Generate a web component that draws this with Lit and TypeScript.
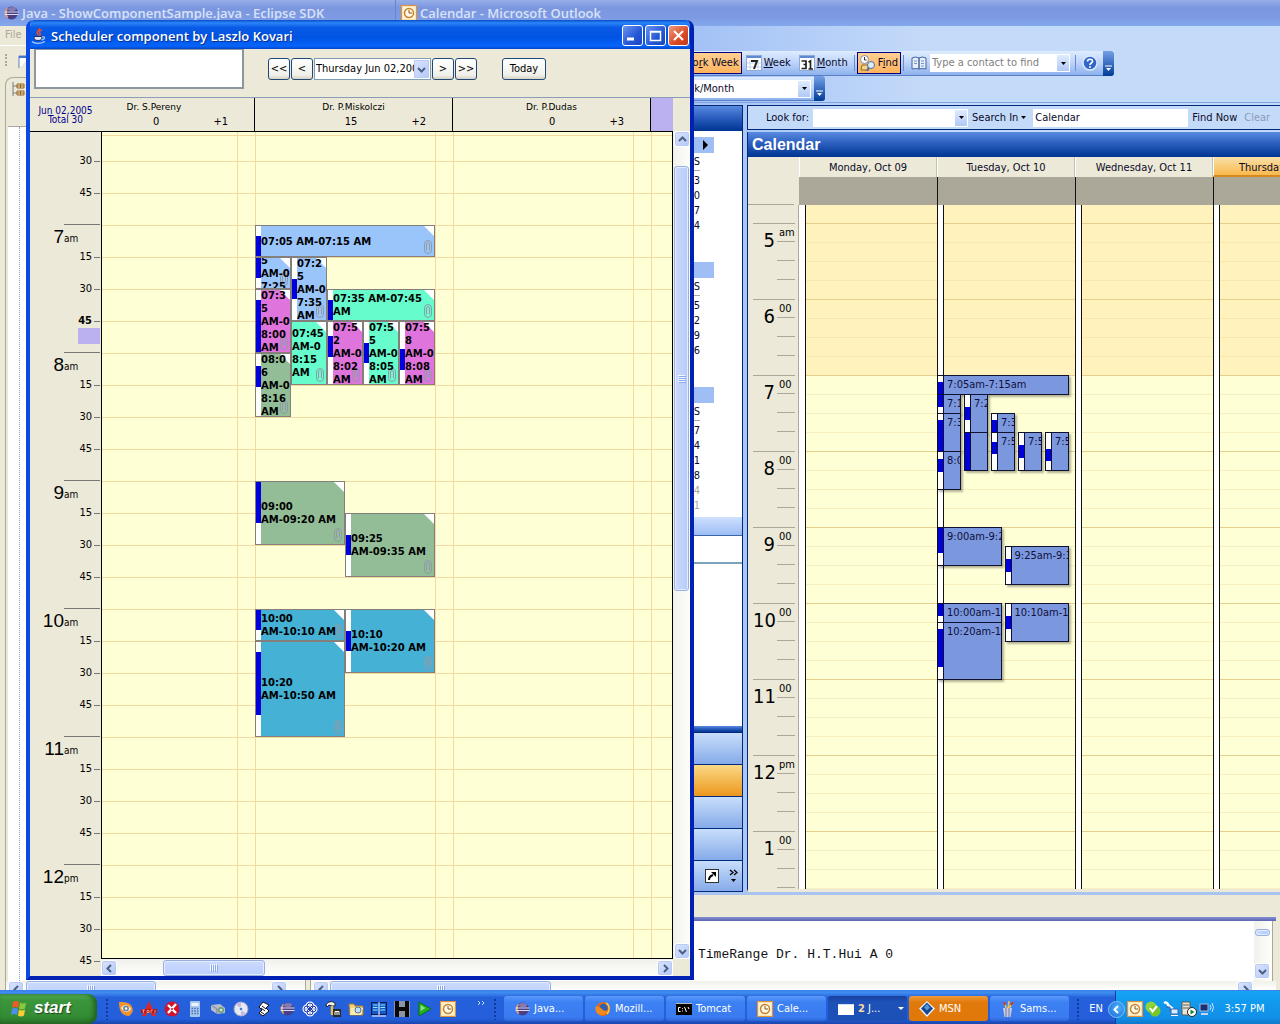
import { LitElement, html, css, svg, nothing } from "lit";
import { customElement } from "lit/decorators.js";
import { classMap } from "lit/directives/class-map.js";
import { styleMap } from "lit/directives/style-map.js";

interface Visit {
  start: number;
  end: number;
  /** Slot range in minutes since midnight, always on quarter hours. */
  from: number;
  to: number;
  tone: string;
  lines: string;
  label: string;
  /** First column and span in the ten-column scheduler grid. */
  col: number;
  span: number;
  /** First lane and span in the calendar grid. */
  lane: number;
  lanes: number;
  bare?: boolean;
}

const MORNING: Visit[] = [
  { start: 425, end: 435, from: 420, to: 435, tone: "sky", lines: "07:05 AM-07:15 AM", label: "7:05am-7:15am", col: 1, span: 10, lane: 1, lanes: 5 },
  { start: 435, end: 445, from: 435, to: 450, tone: "sky", lines: "07:1\n5\nAM-0\n7:25\nAM", label: "7:15am-7:25am", col: 1, span: 2, lane: 1, lanes: 1 },
  { start: 445, end: 455, from: 435, to: 465, tone: "sky", lines: "07:2\n5\nAM-0\n7:35\nAM", label: "7:25am-7:35am", col: 3, span: 2, lane: 2, lanes: 1 },
  { start: 455, end: 465, from: 450, to: 465, tone: "mint", lines: "07:35 AM-07:45\nAM", label: "7:35am-7:45am", col: 5, span: 6, lane: 3, lanes: 1 },
  { start: 455, end: 480, from: 450, to: 480, tone: "pink", lines: "07:3\n5\nAM-0\n8:00\nAM", label: "7:35am-8:00am", col: 1, span: 2, lane: 1, lanes: 1 },
  { start: 465, end: 495, from: 465, to: 495, tone: "mint", lines: "07:45\nAM-0\n8:15\nAM", label: "", col: 3, span: 2, lane: 2, lanes: 1, bare: true },
  { start: 472, end: 482, from: 465, to: 495, tone: "pink", lines: "07:5\n2\nAM-0\n8:02\nAM", label: "7:52am-8:02am", col: 5, span: 2, lane: 3, lanes: 1 },
  { start: 475, end: 485, from: 465, to: 495, tone: "mint", lines: "07:5\n5\nAM-0\n8:05\nAM", label: "7:55am-8:05am", col: 7, span: 2, lane: 4, lanes: 1 },
  { start: 478, end: 488, from: 465, to: 495, tone: "pink", lines: "07:5\n8\nAM-0\n8:08\nAM", label: "7:58am-8:08am", col: 9, span: 2, lane: 5, lanes: 1 },
  { start: 486, end: 496, from: 480, to: 510, tone: "sage", lines: "08:0\n6\nAM-0\n8:16\nAM", label: "8:06am-8:16am", col: 1, span: 2, lane: 1, lanes: 1 },
];

const LATER: Visit[] = [
  { start: 540, end: 560, from: 540, to: 570, tone: "sage", lines: "09:00\nAM-09:20 AM", label: "9:00am-9:20am", col: 1, span: 5, lane: 1, lanes: 1 },
  { start: 565, end: 575, from: 555, to: 585, tone: "sage", lines: "09:25\nAM-09:35 AM", label: "9:25am-9:35am", col: 6, span: 5, lane: 2, lanes: 1 },
  { start: 600, end: 610, from: 600, to: 615, tone: "teal", lines: "10:00\nAM-10:10 AM", label: "10:00am-10:10am", col: 1, span: 5, lane: 1, lanes: 1 },
  { start: 610, end: 620, from: 600, to: 630, tone: "teal", lines: "10:10\nAM-10:20 AM", label: "10:10am-10:20am", col: 6, span: 5, lane: 2, lanes: 1 },
  { start: 620, end: 650, from: 615, to: 660, tone: "teal", lines: "10:20\nAM-10:50 AM", label: "10:20am-10:50am", col: 1, span: 5, lane: 1, lanes: 1 },
];

const barStyle = (v: Visit) => {
  const total = v.to - v.from;
  return styleMap({
    top: `${((v.start - v.from) / total) * 100}%`,
    height: `${((Math.min(v.end, v.to) - v.start) / total) * 100}%`,
  });
};

const base = css`
  * { box-sizing: border-box; }
  button, input, select {
    font: inherit; color: inherit; margin: 0; padding: 0; border: 0;
    background: none; border-radius: 0; appearance: none; outline: 0; min-width: 0;
  }
  svg { display: block; flex: none; }
  .bar { display: flex; flex: none; background: linear-gradient(90deg, #f1f1ec, #fefefb); }
  .bar.flat { background: linear-gradient(#f1f1ec, #fefefb); }
  .bar.vertical { flex-direction: column; width: 17px; }
  .arrow {
    width: 16px; height: 16px; flex: none; display: grid; place-items: center;
    background: linear-gradient(135deg, #dbe5fe, #b3c8f8); border: 1px solid #fff;
    border-radius: 3px; box-shadow: inset 0 0 0 1px #b9cbf3;
  }
  .thumb {
    display: grid; place-items: center; border-radius: 3px; border: 1px solid #98b0e4;
    background: linear-gradient(#cbdafe, #bccffc); box-shadow: inset 0 0 0 1px #e4ecff;
  }
  .vertical .thumb { background: linear-gradient(90deg, #cbdafe, #b7cbf9); }
  .grow { flex: 1; }
`;

const chevron = (dir: "up" | "down" | "left" | "right", color = "#4d6185") => {
  const d = { up: "M1 6 4.500 2.500 8 6", down: "M1 3 4.500 6.500 8 3", left: "M6 1 2.500 4.500 6 8", right: "M3 1 6.500 4.500 3 8" }[dir];
  return html`<svg width="9" height="9" viewBox="0 0 9 9"><path d=${d} fill="none" stroke=${color} stroke-width="2" /></svg>`;
};
const grip = (vertical = false) =>
  vertical
    ? html`<svg width="8" height="8"><path d="M0 .5h7M0 2.500h7M0 4.500h7M0 6.500h7" stroke="#f4f8ff" /><path d="M1 1.500h7M1 3.500h7M1 5.500h7M1 7.500h7" stroke="#8ca8ec" /></svg>`
    : html`<svg width="8" height="8"><path d="M.5 0v7M2.500 0v7M4.500 0v7M6.500 0v7" stroke="#f4f8ff" /><path d="M1.500 1v7M3.500 1v7M5.500 1v7M7.500 1v7" stroke="#8ca8ec" /></svg>`;
const caret = html`<svg width="5" height="3" viewBox="0 0 5 3"><path d="M0 0h5L2.500 3z" fill="#000" /></svg>`;

const pic = (body: unknown, size = 16) =>
  html`<svg width=${size} height=${size} viewBox="0 0 16 16" aria-hidden="true">${body}</svg>`;

const icons = {
  eclipse: svg`<circle cx="8.500" cy="8" r="6.500" fill="#4a3f86"/><path d="M3.500 3.500Q0 8 3.500 12.500 6 13 5 12 2.500 8 5 3z" fill="#f3a86b"/><ellipse cx="9" cy="4" rx="4" ry="2" fill="#9b95c8" opacity=".7"/><path d="M1.500 7h14M1.500 9.500h14" stroke="#dcdcf2" stroke-width="1.200"/>`,
  clock: svg`<rect x=".5" y=".5" width="15" height="15" fill="#fbe3ae" stroke="#e0913a"/><rect x="2" y="2" width="12" height="12" fill="#fff5dc"/><circle cx="8" cy="8" r="4.500" fill="#fffbe8" stroke="#c8822c" stroke-width="1.500"/><path d="M8 5v3h3" fill="none" stroke="#8a5418"/>`,
  java: svg`<path d="M8.500 0c1.500 2-4 3-2 5.500.8 1 .5 1.500 0 2M11 2c-3 1-3 2-2 3.500s-.5 2-1 2" fill="none" stroke="#e8502c" stroke-width="1.500"/><path d="M3 8.500h8c0 3-1 4-4 4s-4-1-4-4z" fill="#e4e9f6" stroke="#18346c"/><path d="M11 9c4-1 3 2.500-.5 3M1 13.500c3 2.500 9 2.500 13 0" fill="none" stroke="#a8c4f4" stroke-width="1.300"/>`,
  eye: svg`<path d="M1 1c5 0 11 0 13 5 2 4 0 7-3 9C4 15 1 10 1 1z" fill="#f0932e"/><path d="M3 7c3-4 7-4 10 1-3 4-7 4-10-1z" fill="#fff2dc"/><circle cx="8" cy="7.500" r="3" fill="#75879b"/><circle cx="8" cy="7.500" r="1.200" fill="#fff"/>`,
  toros: svg`<path d="M8 0 15 15h-4L8 8l-3 7H1z" fill="#d92727"/><rect y="8" width="16" height="4" fill="#b61515"/><path d="M1 9h3M2.500 9v3M6 9.500h2v2H6zM10 12V9h2M14 9v3" stroke="#f8b0a8" fill="none" stroke-width=".8"/>`,
  redx: svg`<circle cx="8" cy="8" r="7.500" fill="#d3122b"/><path d="m4 4 8 8M12 3 4 12" stroke="#fff" stroke-width="2.400"/><circle cx="8" cy="8" r="1" fill="#d3122b"/>`,
  calc: svg`<rect x="3" y="0" width="10" height="16" rx="1" fill="#a8c6ee"/><rect x="4.500" y="2" width="7" height="3" fill="#eaf5ff"/><path d="M4.500 7.500h7M4.500 10h7M4.500 12.500h7" stroke="#4a74b8" stroke-width="1.500" stroke-dasharray="1.600 1.100"/>`,
  camera: svg`<path d="m1 4 9-1 5 4v5l-8 1-6-4z" fill="#b6bccb"/><circle cx="11" cy="9" r="3" fill="#6fa07c"/><circle cx="11" cy="9" r="1.300" fill="#d8e6dd"/><path d="m1 4 6 4v5" fill="none" stroke="#76809a"/>`,
  disc: svg`<circle cx="8" cy="8" r="7" fill="#e5e9f2" stroke="#98a4bc"/><path d="M8 8 3 3a7 7 0 0 1 5-2zM8 8l5 5a7 7 0 0 1-5 2z" fill="#c7b9e4"/><circle cx="8" cy="8" r="2" fill="#4b78d0" stroke="#fff"/>`,
  pages: svg`<path d="m7 1 6 3-3 3 3 3-6 5-4-3 3-3-3-3z" fill="#fff" stroke="#111"/><path d="m5 7 4 3M6 5l4 3M5 11l3 2" stroke="#111"/>`,
  atom: svg`<g fill="none" stroke="#fff" stroke-width="3"><circle cx="8" cy="5" r="3"/><circle cx="11" cy="8" r="3"/><circle cx="5" cy="8" r="3"/><circle cx="8" cy="11" r="3"/></g><g fill="none" stroke="#2439a8" stroke-width="1"><circle cx="8" cy="5" r="3"/><circle cx="11" cy="8" r="3"/><circle cx="5" cy="8" r="3"/><circle cx="8" cy="11" r="3"/></g>`,
  hammer: svg`<path d="M1 4c2-4 6-4 9-2v3H7L4 4 2 6z" fill="#f4f4f4" stroke="#222"/><path d="M7 5v9" stroke="#e6c04a" stroke-width="2.500"/><rect x="8" y="8" width="8" height="8" fill="#2a2a2a"/><path d="M10 14v-3.500h4V14M12 10.500V14" stroke="#fff" fill="none"/>`,
  folder: svg`<path d="M1 3h5l1 2h8v9H2z" fill="#f2d37a" stroke="#a87f22"/><path d="M3 7h12l-2 7H2z" fill="#fbeab0"/><circle cx="10" cy="9" r="3" fill="#bfe0fb" stroke="#54749c"/>`,
  panels: svg`<rect x=".5" y="1.500" width="15" height="12" fill="#1458c8" stroke="#041b58"/><path d="M8 1v13" stroke="#fff"/><path d="M2 4h4.500M2 6.500h4.500M2 9h4.500M9.500 4H14M9.500 6.500H14M9.500 9H14" stroke="#8fe8ff"/><path d="M1 15h14" stroke="#fff"/>`,
  hex: svg`<rect width="16" height="16" fill="#8d93a6"/><path d="M1 0h4v6h6V0h4v16h-4v-6H5v6H1z" fill="#080808"/>`,
  play: svg`<path d="M2 1v14l12-7z" fill="#25b125" stroke="#0b6f12"/><path d="M3.500 4v6l5-3z" fill="#8ae37c"/>`,
  fox: svg`<circle cx="8" cy="8" r="7" fill="#e36a12"/><circle cx="8.500" cy="7" r="4.200" fill="#3460b4"/><path d="M1 5c2 1 3 0 5 2s3 4 7 2c-1 5-8 7-11 3C0 10 0 7 1 5z" fill="#f08a1c"/><path d="M11 2c4 2 4 8 1 11" stroke="#fbc63c" stroke-width="1.500" fill="none"/>`,
  cmd: svg`<rect y="2" width="16" height="12" fill="#000"/><path d="M0 2.500h16" stroke="#b8b8b8"/><path d="M4.500 6.500h-2v4h2M6.500 7v.8M6.500 9.500v.9M8.500 6l2 5M12 6l1 2" stroke="#fff" fill="none"/>`,
  blank: svg`<rect y="3" width="16" height="11" fill="#fff"/><path d="M0 3.500h16" stroke="#cfe0ff"/>`,
  msn: svg`<path d="m8 0 8 7.500L8 16 0 7.500z" fill="#eaf3ff"/><path d="m8 1.500 6 6L8 14 2 7.500z" fill="#15488e"/><path d="m8 3 3 3.500-3 3-3-3z" fill="#5596d8"/>`,
  brushes: svg`<path d="m4 1 3 8M13 1 8 9M9 0 8 8" stroke="#e8c35c" stroke-width="1.600"/><path d="m4 1 1 3M13 1l-2 3" stroke="#c8302a" stroke-width="2"/><path d="M3 7h9l-1.500 9h-6z" fill="#c8cfe2"/><path d="M6 7v9M9 7v9" stroke="#7e6fa0"/>`,
  phone: svg`<circle cx="6" cy="6" r="5.500" fill="#8fd33a"/><circle cx="10" cy="10" r="5.500" fill="#7cc728"/><path d="m5 7 2.500 3.500L12 5" fill="none" stroke="#fff" stroke-width="2"/>`,
  plug: svg`<path d="M1 2c2-1 4 0 4 2l5 4" fill="none" stroke="#fff" stroke-width="2.500"/><path d="M3 6h4v4" fill="none" stroke="#3c5aa8"/><rect x="8" y="8" width="7" height="5" fill="#d8ecff" stroke="#3867b0"/><path d="M8 14.500h7" stroke="#fff"/>`,
  server: svg`<path d="M1 1h8v13H1z" fill="#e8e4d4" stroke="#5a5a52"/><path d="M2 4h6M2 7h6" stroke="#5a5a52"/><circle cx="11" cy="11" r="4.500" fill="#fff" stroke="#222"/><path d="M9.500 8.500v5l4-2.500z" fill="#16882a"/>`,
  speaker: svg`<rect x="1" y="3" width="8" height="7" fill="#1c2f70" stroke="#a8b8e0"/><path d="M2 13h7" stroke="#c9d4ee" stroke-width="2"/><path d="M11 4q2 2.500 0 5M13 2q3 4.500 0 9" fill="none" stroke="#d5e4ff"/>`,
  week: svg`<rect x=".5" y=".5" width="15" height="15" fill="#fff" stroke="#8fa9d8"/><path d="M1 2h14" stroke="#5c88d4" stroke-width="2"/><path d="M4 5v10M12 5v10M1 8h14M1 12h14" stroke="#c6d3ec"/><path d="M5 6h6l-3 8" fill="none" stroke="#222" stroke-width="2"/>`,
  month: svg`<rect x=".5" y=".5" width="15" height="15" fill="#fff" stroke="#8fa9d8"/><path d="M1 2h14" stroke="#5c88d4" stroke-width="2"/><path d="M2.500 6H7v3.500H4.500M7 9.500v4H2.500M9.500 7 11.500 6v8M9.500 14h4.500" fill="none" stroke="#222" stroke-width="1.700"/>`,
  find: svg`<circle cx="4.500" cy="4.500" r="4" fill="#fff" stroke="#7c8cab"/><path d="M4.500 2v3h2" stroke="#333" fill="none"/><path d="M2 10h6v5H1z" fill="#f3d58a" stroke="#8e6d2a"/><circle cx="11" cy="10" r="3.500" fill="#dceefc" stroke="#516e9c"/><path d="m9 13-2 3" stroke="#516e9c" stroke-width="2"/>`,
  book: svg`<path d="M1 3q4-2 7 0 3-2 7 0v11q-4-1-7 0-3-1-7 0z" fill="#e6eefb" stroke="#45639c"/><path d="M8 3v11" stroke="#45639c" stroke-width="1.500"/><path d="M3 6h3M3 8.500h3M10 6h3M10 8.500h3M10 11h3" stroke="#7b94c4"/>`,
  help: svg`<circle cx="8" cy="8" r="7" fill="#2f66c8" stroke="#dbe8ff" stroke-width="1.500"/><path d="M5.500 6.500c0-3 5-3 5 0 0 1.500-2.500 1.500-2.500 3.500" fill="none" stroke="#fff" stroke-width="1.700"/><circle cx="8" cy="12" r="1" fill="#fff"/>`,
  shortcut: svg`<rect x="1.500" y="1.500" width="13" height="13" fill="#fff" stroke="#333"/><path d="M5 12c0-3 1-4 4-5" fill="none" stroke="#000" stroke-width="2"/><path d="M7 4h5v5z" fill="#000"/>`,
  tree: svg`<path d="M2 1v14M2 5h4M2 12h4" stroke="#7d7d7d"/><path d="M6 3h7v4H6zM9.500 3v4M6 5h7M6 10h7v4H6zM9.500 10v4M6 12h7" fill="#fce7b4" stroke="#93652a"/>`,
  doc: svg`<path d="M2 14V2h12" fill="#fff" stroke="#5a7fbb"/><path d="M2 3h12" stroke="#3f77d0" stroke-width="2"/>`,
};

@customElement("eclipse-window")
class EclipseWindow extends LitElement {
  static styles = [base, css`
    :host { display: flex; flex-direction: column; background: #ece9d8; font: 11px/14px "DejaVu Sans Condensed", "DejaVu Sans", sans-serif; color: #aca899; }
    .title { display: flex; align-items: center; gap: 3px; height: 26px; padding: 0 3px; color: #d8e2f8; font: 600 13px/16px "Open Sans", sans-serif; background: linear-gradient(#96aee8, #7b96df 30%, #7d9be3 70%, #84a8ec); flex: none; }
    .menu { height: 19px; padding: 2px 5px; flex: none; }
    .tools { height: 29px; padding: 8px 5px; display: flex; gap: 10px; border-top: 1px solid #fff; flex: none; }
    .handle { width: 2px; border-left: 2px dotted #aca899; }
    .work { display: flex; flex: 1; min-height: 0; padding: 3px 4px 0 5px; }
    .view { width: 301px; display: flex; flex-direction: column; border: 1px solid #aca899; border-bottom: 0; border-radius: 8px 8px 0 0; }
    .tab { height: 48px; padding: 3px 5px; flex: none; }
    .list { flex: 1; background: #fff; margin-left: 2px; border-top: 1px solid #aca899; }
    .stem { height: 100%; margin-left: 11px; border-left: 1px dotted #8aa0c8; width: 1px; }
    .side { flex: 1; display: flex; flex-direction: column; margin-left: 4px; border-left: 1px solid #aca899; min-width: 0; }
    .console { margin-top: auto; height: 73px; flex: none; display: flex; flex-direction: column; }
    .rule { height: 4px; background: linear-gradient(#8290d0, #5e64b4); flex: none; }
    .out { flex: 1; display: flex; background: #fff; color: #111; min-height: 0; margin-right: 3px; border-right: 1px solid #aca899; }
    .text { flex: 1; margin: 0; padding: 26px 0 0 387px; font: 13px/16px "Liberation Mono", monospace; }
    .foot { height: 9px; overflow: hidden; padding-left: 2px; }
    .w1 { width: 130px; margin-left: 2px; height: 16px; }
    .w2 { width: 221px; margin-left: 1px; height: 16px; }
    .nub { height: 7px; margin: 8px 1px 0; }
    .out .bar { padding-right: 1px; width: 18px; }
    .out .arrow { margin-bottom: 2px; }
    .in1 { margin-right: 18px; }
    .in2 { margin-right: 23px; }
  `];
  render() {
    return html`
      <div class="title">${pic(icons.eclipse)}<span>Java - ShowComponentSample.java - Eclipse SDK</span></div>
      <div class="menu">File</div>
      <div class="tools"><span class="handle"></span>${pic(icons.doc)}</div>
      <div class="work">
        <div class="view">
          <div class="tab">${pic(icons.tree)}</div>
          <div class="list"><div class="stem"></div></div>
          <div class="bar flat foot">
            <button class="arrow" aria-label="Scroll left">${chevron("left")}</button>
            <div class="thumb w1">${grip()}</div><span class="grow"></span>
            <button class="arrow in1" aria-label="Scroll right">${chevron("right")}</button>
          </div>
        </div>
        <div class="side">
          <div class="console">
            <div class="rule"></div>
            <div class="out">
              <pre class="text">TimeRange Dr. H.T.Hui A 0</pre>
              <div class="bar vertical">
                <div class="thumb nub"></div><span class="grow"></span>
                <button class="arrow" aria-label="Scroll down">${chevron("down")}</button>
              </div>
            </div>
            <div class="bar flat foot">
              <button class="arrow" aria-label="Scroll left">${chevron("left")}</button>
              <div class="thumb w2">${grip()}</div><span class="grow"></span>
              <button class="arrow in2" aria-label="Scroll right">${chevron("right")}</button>
            </div>
          </div>
        </div>
      </div>`;
  }
}

@customElement("outlook-window")
class OutlookWindow extends LitElement {
  static styles = [base, css`
    :host { display: flex; flex-direction: column; background: linear-gradient(90deg, #9ebef5 30%, #c4daf9 60%); font: 11px/14px "DejaVu Sans Condensed", "DejaVu Sans", sans-serif; color: #0a0a28; border-bottom: 3px solid #a9c4ee; overflow: hidden; }
    .title { display: flex; align-items: center; gap: 3px; height: 26px; padding: 0 5px; flex: none; color: #d8e2f8; font: 600 13px/16px "Open Sans", sans-serif; background: linear-gradient(#96aee8, #7b96df 30%, #7d9be3 70%, #84a8ec); border-left: 1px solid #6c84cc; }
    .menu { height: 25px; flex: none; }
    .tools { display: flex; justify-content: flex-end; align-items: center; height: 25px; margin-bottom: 1px; flex: none; background: linear-gradient(#dfecff, #bcd3f9 50%, #8db2ee); border-bottom: 1px solid #5a7fc4; border-radius: 0 0 4px 0; }
    .t1 { width: 719px; }
    .t2 { width: 430px; height: 24px; }
    .tool { display: flex; align-items: center; gap: 2px; height: 22px; padding: 0 4px; white-space: nowrap; }
    .tool.on { background: linear-gradient(#ffcf92, #ffb35e); border: 1px solid #000080; padding: 0 2px; }
    .sep { width: 1px; height: 16px; background: #6a8ccb; margin: 0 2px; }
    .gap { width: 5px; }
    .field { display: flex; height: 18px; background: #fff; border: 1px solid #fff; }
    .field input, .field select { flex: 1; padding: 0 1px; width: 20px; }
    .field input::placeholder { color: #808080; opacity: 1; }
    .drop { width: 12px; display: grid; place-items: center; background: linear-gradient(#e0ebff, #afc9f5); flex: none; }
    .contact { width: 140px; margin: 0 3px; }
    .cap { width: 11px; height: 25px; margin-left: 1px; background: linear-gradient(#75a0e8, #003c96); border-radius: 0 3px 3px 0; display: grid; place-items: end center; padding-bottom: 4px; }
    .t2 .cap { margin-left: 3px; }
    .cur { width: 163px; }
    .body { flex: 1; display: flex; min-height: 0; gap: 4px; padding: 2px 0 0; border-top: 1px solid #7da2e0; }
    .nav { width: 348px; flex: none; display: flex; flex-direction: column; background: #fff; border: 1px solid #00297a; }
    .band { background: linear-gradient(#5a8be0, #2c5fbf 45%, #003493); flex: none; }
    .crown { height: 25px; }
    .mini { height: 125px; padding: 6px 42px 0 0; text-align: right; line-height: 15px; flex: none; }
    .mini .cap2 { height: 16px; margin-right: -14px; background: #9ebef5; display: flex; justify-content: flex-end; align-items: center; padding-right: 5px; }
    .mini .dow { height: 17px; border-bottom: 1px solid #aca899; margin: 1px 0 2px 200px; }
    .mini .dim { color: #aca899; }
    .last { height: 136px; }
    .strip { height: 19px; flex: none; background: linear-gradient(#cfe0ff, #9cbdf4); border-bottom: 1px solid #3c64ac; }
    .tick { height: 28px; border-bottom: 2px solid #7ba4ba; flex: none; }
    .split { height: 6px; }
    .folder { display: block; width: 100%; height: 32px; flex: none; background: linear-gradient(#c8defa, #86abea); border-top: 1px solid #00297a; }
    .folder.on { background: linear-gradient(#fbd986, #ec971c); }
    .foot { height: 31px; flex: none; display: flex; align-items: center; justify-content: flex-end; gap: 6px; padding-right: 2px; background: linear-gradient(#c8defa, #86abea); border-top: 1px solid #00297a; }
    .main { flex: 1; display: flex; flex-direction: column; min-width: 0; }
    .search { display: flex; align-items: center; height: 25px; flex: none; border: 1px solid #00297a; border-right: 0; background: #c4daf9; padding-left: 18px; white-space: nowrap; }
    .search .field { width: 155px; margin: 0 4px; }
    .search button { white-space: nowrap; }
    .menuish { display: flex; align-items: center; gap: 3px; margin-right: 3px; }
    .clear { color: #8a9bb8; margin-left: 7px; }
    .heading { margin: 2px 0 0; height: 25px; flex: none; padding: 4px; color: #fff; font: bold 16px/18px "Liberation Sans", sans-serif; border-left: 1px solid #00297a; }
    .planner { flex: 1; display: grid; grid-template: 20px 28px minmax(0, 1fr) / 51px repeat(4, 138px); min-height: 0; border-left: 1px solid #00297a; border-bottom: 3px solid #ece9d8; overflow: hidden; background: #ece9d8; }
    .day { padding: 4px 0; text-align: center; border-left: 1px solid #fff; border-right: 1px solid #c5c2b2; white-space: nowrap; overflow: hidden; }
    .day.today { background: linear-gradient(#f8e0a8, #f9b94e); border-bottom: 2px solid #d48a1c; text-align: left; padding-left: 25px; }
    .allday { background: #aca899; border-left: 1px solid #111; }
    .allday.first { border-left-color: #aca899; }
    .corner { border-bottom: 1px solid #aca899; margin: 0 5px 0 0; }
    .gutter { overflow: hidden; border-right: 1px solid #aca899; padding: 18px 3px 0 5px; }
    .hour { height: 76px; border-top: 1px solid #aca899; display: grid; grid-template-columns: 24px 18px; }
    .num { font: 20px/32px "DejaVu Sans Condensed", "DejaVu Sans", sans-serif; text-align: right; padding-right: 2px; color: #000; }
    .quarters { display: grid; grid-template-rows: 18px 19px 19px; font-size: 11px; line-height: 18px; color: #000; }
    .quarters span { border-bottom: 1px solid #aca899; padding-left: 2px; white-space: nowrap; }
    .lane { overflow: hidden; border-left: 1px solid #111; display: flex; background: linear-gradient(#fff2bc 170px, #ffffd5 170px); }
    .lane.first { border-left-color: #fff; }
    .free { width: 6px; background: #fff; border-right: 1px solid #111; flex: none; }
    .rows { flex: 1; background: repeating-linear-gradient(transparent 0 18px, #eed79c66 18px 19px); }
    .hours { height: 100%; margin-top: 18px; background: repeating-linear-gradient(#e6cf8c 0 1px, transparent 1px 76px); }
    .wrap { position: relative; width: 0; }
    .group { display: grid; grid-auto-rows: 19px; column-gap: 3px; grid-column: 1 / 2; width: 132px; }
    .g5 { grid-template-columns: repeat(5, 1fr); grid-row: 10 / span 6; }
    .g2 { grid-template-columns: repeat(2, 1fr); grid-row: 18 / span 8; }
    .visit { display: flex; border: 1px solid #101030; background: #7b97de; margin-bottom: -1px; min-width: 0; box-shadow: 2px 2px 2px #0000004d; color: #10103c; }
    .state { position: relative; width: 6px; background: #fff; border-right: 1px solid #101030; flex: none; }
    .busy { position: absolute; left: 0; right: 0; background: #0000dc; }
    .label { overflow: hidden; white-space: nowrap; padding: 2px 0 0 3px; min-width: 0; }
    .overlay { position: absolute; top: 0; left: -7px; display: grid; grid-template: 18px repeat(40, 19px) / 132px; }
  `];

  private visit(v: Visit, origin: number) {
    const place = styleMap({
      gridColumn: `${v.lane} / span ${v.lanes}`,
      gridRow: `${(v.from - origin) / 15 + 1} / span ${(v.to - v.from) / 15}`,
    });
    return html`<div class="visit" style=${place}>
      <div class="state"><div class="busy" style=${barStyle(v)}></div></div>
      <div class="label">${v.label}</div>
    </div>`;
  }

  render() {
    const months = [
      ["3", "0", "7", "4"],
      ["5", "2", "9", "6"],
      ["7", "4", "1", "8", "4", "1"],
    ];
    const hours = ["5", "6", "7", "8", "9", "10", "11", "12", "1"];
    const cap = html`<span class="cap"><svg width="7" height="7"><path d="M0 1h7" stroke="#fff" /><path d="M1 3h5L3.500 6z" fill="#fff" /></svg></span>`;
    return html`
      <div class="title">${pic(icons.clock)}<span>Calendar - Microsoft Outlook</span></div>
      <div class="menu"></div>
      <div class="tools t1">
        <button class="tool on"><span>Wo<u>r</u>k Week</span></button>
        <button class="tool">${pic(icons.week)}<span><u>W</u>eek</span></button>
        <button class="tool">${pic(icons.month)}<span><u>M</u>onth</span></button>
        <span class="sep"></span>
        <button class="tool on">${pic(icons.find)}<span>F<u>i</u>nd</span></button>
        <span class="sep"></span>
        <span class="gap"></span>
        ${pic(icons.book)}
        <div class="field contact"><input aria-label="Find a contact" placeholder="Type a contact to find" /><button class="drop" aria-label="Recent contacts">${caret}</button></div>
        <span class="sep"></span>
        <button class="tool" aria-label="Help">${pic(icons.help)}</button>
        ${cap}
      </div>
      <div class="tools t2">
        <div class="field cur"><select aria-label="Current view"><option>Day/Week/Month</option></select><span class="drop">${caret}</span></div>
        ${cap}
      </div>
      <div class="body">
        <div class="nav">
          <div class="band crown"></div>
          ${months.map((m, i) => html`
            <div class=${classMap({ mini: true, last: i === 2 })}>
              <div class="cap2">${i === 0 ? html`<svg width="6" height="10"><path d="M0 0v10l5-5z" fill="#000" /></svg>` : nothing}</div>
              <div class="dow">S</div>
              ${m.map((d, k) => html`<div class=${classMap({ dim: k > 3 })}>${d}</div>`)}
            </div>`)}
          <div class="strip"></div>
          <div class="tick"></div>
          <span class="grow"></span>
          <div class="band split"></div>
          <button class="folder" aria-label="Mail"></button>
          <button class="folder on" aria-label="Calendar"></button>
          <button class="folder" aria-label="Contacts"></button>
          <button class="folder" aria-label="Tasks"></button>
          <div class="foot">${pic(icons.shortcut)}<svg width="14" height="14"><path d="m4 1 3 2.500L4 6M8 1l3 2.500L8 6" fill="none" stroke="#000" stroke-width="1.300" /><path d="M5 10h5L7.500 13z" /></svg></div>
        </div>
        <div class="main">
          <div class="search">
            <label for="look">Look for:</label>
            <div class="field"><input id="look" /><button class="drop" aria-label="Recent searches">${caret}</button></div>
            <button class="menuish">Search In ${caret}</button>
            <div class="field"><input aria-label="Search in" value="Calendar" /></div>
            <button>Find Now</button><button class="clear">Clear</button>
          </div>
          <h1 class="heading band">Calendar</h1>
          <div class="planner">
            <div></div>
            <div class="day">Monday, Oct 09</div>
            <div class="day">Tuesday, Oct 10</div>
            <div class="day">Wednesday, Oct 11</div>
            <div class="day today">Thursday, Oct 12</div>
            <div class="corner"></div>
            ${[0, 1, 2, 3].map((i) => html`<div class=${classMap({ allday: true, first: i === 0 })}></div>`)}
            <div class="gutter">
              ${hours.map((h, i) => html`<div class="hour"><span class="num">${h}</span>
                <div class="quarters"><span>${i === 0 ? "am" : h === "12" ? "pm" : "00"}</span><span></span><span></span></div></div>`)}
            </div>
            ${[0, 1, 2, 3].map((i) => html`
              <div class=${classMap({ lane: true, first: i === 0 })}>
                <div class="free"></div>
                ${i === 1 ? html`<div class="wrap"><div class="overlay">
                  <div class="group g5">${MORNING.map((v) => this.visit(v, 420))}</div>
                  <div class="group g2">${LATER.map((v) => this.visit(v, 540))}</div>
                </div></div>` : nothing}
                <div class="rows"><div class="hours"></div></div>
              </div>`)}
          </div>
        </div>
      </div>`;
  }
}

@customElement("scheduler-window")
class SchedulerWindow extends LitElement {
  static styles = [base, css`
    :host { display: flex; flex-direction: column; background: #ece9d8; border: 4px solid #0a3fd0; border-top: 0; border-radius: 8px 8px 0 0; overflow: hidden; font: 11px/14px "DejaVu Sans Condensed", "DejaVu Sans", sans-serif; color: #000; border-color: #0831d9 #0022b4 #0022b4 #0b4be4; }
    .title { display: flex; align-items: center; gap: 4px; height: 29px; flex: none; margin: 0 -4px; padding: 2px 5px 0; color: #fff; font: 600 13px/16px "Open Sans", sans-serif; background: linear-gradient(#0a4bc8, #2a86fb 10%, #0a5be6 25%, #0054e3 60%, #0664fb 90%, #0445c8); }
    .title h1 { font: inherit; margin: 0; flex: 1; text-shadow: 1px 1px #0a2f8a; }
    .sys { width: 21px; height: 21px; border: 1px solid #fff; border-radius: 3px; display: grid; place-items: center; background: linear-gradient(135deg, #6b93ee, #2457d6 60%, #1a46c0); }
    .sys + .sys { margin-left: -2px; }
    .sys.close { background: linear-gradient(135deg, #ee9a80, #dc4a25 60%, #c03a1a); }
    .toolbar { display: flex; align-items: flex-start; height: 49px; flex: none; padding: 0 4px; border-bottom: 1px solid #8a9cb8; }
    .note { width: 210px; height: 40px; background: #fff; border: 2px solid #8a979f; border-top-width: 1px; margin-right: 24px; }
    .btn { margin: 9px 1px 0 0; height: 22px; min-width: 22px; border: 1px solid #1f4a78; border-radius: 3px; background: linear-gradient(#fff, #f0f0ea 80%, #d8d2c4); }
    .today { width: 44px; margin-left: 24px; }
    .date { display: flex; width: 117px; height: 22px; margin: 9px 1px 0 0; border: 1px solid #7f9db9; background: #fff; padding: 1px; }
    .date select { flex: 1; width: 20px; overflow: hidden; text-overflow: clip; }
    .date .arrow { height: 18px; width: 15px; border: 0; border-radius: 1px; }
    .heads { display: grid; grid-template-columns: 71px 154px 198px 198px 22px 1fr; height: 33px; flex: none; font-size: 10px; line-height: 12px; }
    .sum { color: #00008c; text-align: center; padding-top: 8px; line-height: 9px; white-space: nowrap; }
    .head { display: grid; grid-template: 15px 16px / 1fr; border-right: 1px solid #000; align-items: center; text-align: center; padding: 1px 0 0; font-family: "DejaVu Sans", sans-serif; font-size: 9px; }
    .head.near { padding-right: 47px; }
    .near .totals { margin-right: -47px; }
    .totals { display: flex; justify-content: flex-end; font: 11px/14px "DejaVu Sans Condensed", "DejaVu Sans", sans-serif; gap: 54px; padding-right: 26px; }
    .mark { background: #bbb1f0; }
    .body { flex: 1; display: flex; min-height: 0; }
    .axis { width: 71px; border-top: 1px solid #000; overflow: hidden; flex: none; padding-right: 1px; }
    .ticks { margin-top: -19px; }
    .tick { height: 32px; display: flex; justify-content: flex-end; align-items: center; position: relative; gap: 2px; }
    .tick::after { content: ""; width: 6px; height: 1px; background: #777; }
    .tick.now { font-weight: bold; }
    .pin { position: absolute; right: 0; top: 23px; width: 22px; height: 16px; background: #bbb1f0; z-index: 1; }
    .full { height: 32px; padding: 15px 0 0 0; display: grid; grid-template-columns: 34px 36px; align-items: start; grid-auto-rows: 26px; }
    .big { text-align: right; font: 19px/26px "Liberation Sans", sans-serif; }
    .ampm { border-top: 1px solid #777; line-height: 28px; font-size: 10px; }
    .pane { flex: 1; display: flex; flex-direction: column; min-width: 0; }
    .board { flex: 1; min-height: 0; overflow: hidden; border: 1px solid #000; background: repeating-linear-gradient(#f5d9a0 0 1px, transparent 1px 32px) 0 29px, #ffffd6; }
    .cols { display: grid; grid-template-columns: 135px 18px 180px 18px 180px 18px 1fr; height: 100%; }
    .cols > div { border-left: 1px solid #f5d9a0; min-height: 0; }
    .cols > div:first-child { border-left: 0; }
    .booked { display: grid; grid-template-columns: repeat(10, 1fr); grid-template-rows: 29px; grid-auto-rows: 32px; margin-left: -1px; }
    .visit { position: relative; display: flex; align-items: center; border: 1px solid #857f7c; overflow: hidden; min-width: 0; min-height: 0; }
    .sky { background: #9ac5fb; }
    .mint { background: #66fccc; }
    .pink { background: #df74dc; }
    .sage { background: #92bd97; }
    .teal { background: #45b1d5; }
    .state { position: relative; align-self: stretch; width: 5px; background: #fff; flex: none; }
    .busy { position: absolute; left: 0; right: 0; background: #0000dc; }
    .span { white-space: pre; font: bold 10px/13px "DejaVu Sans", sans-serif; position: relative; }
    .fold { position: absolute; top: 0; right: 0; border-left: 10px solid transparent; border-top: 10px solid #fff; }
    .clip { position: absolute; right: 2px; bottom: 2px; }
    .vertical { padding: 0 1px; }
    .up { margin-bottom: 19px; }
    .v1 { height: 425px; }
    .below { height: 17px; padding: 1px 0 0 0; }
    .h1 { width: 102px; margin-left: 46px; }
    .spacer { height: 17px; background: #ece9d8; }
    .vwrap { display: flex; flex-direction: column; }
    .vwrap .bar { flex: 1; }
  `];

  private visit(v: Visit) {
    const place = styleMap({
      gridColumn: `${v.col} / span ${v.span}`,
      gridRow: `${(v.from - 420) / 15 + 4} / span ${(v.to - v.from) / 15}`,
    });
    return html`<div class="visit ${v.tone}" style=${place}>
      <span class="fold"></span>
      ${v.bare ? nothing : html`<div class="state"><div class="busy" style=${barStyle(v)}></div></div>`}
      <svg class="clip" width="8" height="14"><rect x=".5" y=".5" width="7" height="13" rx="3.500" fill="none" stroke="#909aa8" /><path d="M2.500 10.500v-7q1.500-2 3 0v6.500" fill="none" stroke="#909aa8" /></svg>
      <div class="span">${v.lines}</div>
    </div>`;
  }

  render() {
    const ticks: unknown[] = [];
    for (let t = 375; t <= 765; t += 15) {
      const h = t / 60;
      ticks.push(
        t % 60 === 0
          ? html`<div class="full"><span class="big">${h}</span><span class="ampm">${h >= 12 ? "pm" : "am"}</span></div>`
          : html`<div class=${classMap({ tick: true, now: t === 465 })}>${t % 60}${t === 465 ? html`<i class="pin"></i>` : nothing}</div>`
      );
    }
    return html`
      <div class="title">${pic(icons.java)}<h1>Scheduler component by Laszlo Kovari</h1>
        <button class="sys" aria-label="Minimize"><svg width="13" height="13"><path d="M1 10h7" stroke="#fff" stroke-width="3" /></svg></button>
        <button class="sys" aria-label="Maximize"><svg width="13" height="13"><path d="M1.500 2.500h10v9h-10zM1 3h11" fill="none" stroke="#fff" stroke-width="1.500" /></svg></button>
        <button class="sys close" aria-label="Close"><svg width="13" height="13"><path d="m2 2 9 9M11 2l-9 9" stroke="#fff" stroke-width="2" /></svg></button>
      </div>
      <div class="toolbar">
        <input class="note" aria-label="Note" />
        <button class="btn">&lt;&lt;</button><button class="btn">&lt;</button>
        <div class="date"><select aria-label="Date"><option>Thursday Jun 02,2005</option></select><span class="arrow">${chevron("down")}</span></div>
        <button class="btn">&gt;</button><button class="btn">&gt;&gt;</button>
        <button class="btn today">Today</button>
      </div>
      <div class="heads">
        <div class="sum">Jun 02,2005<br />Total 30</div>
        <div class="head near"><span>Dr. S.Pereny</span><span class="totals"><span>0</span><span>+1</span></span></div>
        <div class="head"><span>Dr. P.Miskolczi</span><span class="totals"><span>15</span><span>+2</span></span></div>
        <div class="head"><span>Dr. P.Dudas</span><span class="totals"><span>0</span><span>+3</span></span></div>
        <div class="mark"></div>
      </div>
      <div class="body">
        <div class="axis"><div class="ticks">${ticks}</div></div>
        <div class="pane">
          <div class="board"><div class="cols">
            <div></div><div></div>
            <div><div class="booked">${[...MORNING, ...LATER].map((v) => this.visit(v))}</div></div>
            <div></div><div></div><div></div><div></div>
          </div></div>
          <div class="bar flat below">
            <button class="arrow" aria-label="Scroll left">${chevron("left")}</button>
            <div class="thumb h1">${grip()}</div><span class="grow"></span>
            <button class="arrow" aria-label="Scroll right">${chevron("right")}</button>
          </div>
        </div>
        <div class="vwrap">
          <div class="bar vertical">
            <button class="arrow up" aria-label="Scroll up">${chevron("up")}</button>
            <div class="thumb v1">${grip(true)}</div><span class="grow"></span>
            <button class="arrow" aria-label="Scroll down">${chevron("down")}</button>
          </div>
          <div class="spacer"></div>
        </div>
      </div>`;
  }
}

@customElement("task-bar")
class TaskBar extends LitElement {
  static styles = [base, css`
    :host { display: flex; height: 34px; color: #fff; font: 11px/14px "DejaVu Sans Condensed", "DejaVu Sans", sans-serif; background: linear-gradient(#3a80e8, #3f8cf0 8%, #2661dc 22%, #245edb 85%, #1a46ac); overflow: hidden; }
    .start { width: 97px; margin-top: 4px; display: flex; align-items: center; gap: 6px; padding: 0 0 2px 10px; font: italic bold 17px/20px "Liberation Sans", sans-serif; text-shadow: 1px 1px 1px #1c4a1c; background: linear-gradient(#5cb55c, #3c963c 20%, #338c33 75%, #2a702a); border-radius: 0 9px 9px 0; box-shadow: inset -3px 0 5px #1f5f1f; }
    .dots { width: 4px; margin: 9px 0 4px; background: radial-gradient(circle at 1px 1px, #123a9c 1px, transparent 1px) 0 0 / 4px 4px; flex: none; }
    .quick { display: flex; align-items: center; gap: 7px; margin: 4px 21px 0 8px; }
    .first { margin-left: 9px; }
    .more { align-self: flex-start; padding-top: 10px; margin-right: 8px; }
    .tasks { display: flex; gap: 2px; flex: 1; padding: 6px 0 3px; margin-left: 6px; min-width: 0; }
    .task { flex: 0 1 79px; height: 25px; display: flex; align-items: center; gap: 4px; padding: 0 10px; white-space: nowrap; overflow: hidden; border-radius: 3px; background: linear-gradient(#5a98fa, #3c81f3 25%, #3a7bf0 85%, #2d66d6); }
    .task.down { background: linear-gradient(#163f9e, #1e52b7 25%, #1d50b8); padding-right: 2px; }
    .task.alert { background: linear-gradient(#f09a3c, #e07a0c 25%, #e07808); }
    .task span { flex: 1; text-align: left; }
    .lang { align-self: center; padding-top: 4px; margin: 0 12px 0 8px; }
    .tray { display: flex; align-items: center; gap: 2px; width: 165px; flex: none; margin-top: 1px; padding: 3px 8px 0 0; background: linear-gradient(#16a4f4, #109bf0 30%, #1290e8 80%, #0d78cc); border-left: 1px solid #0d3f9c; }
    .hide { width: 17px; height: 17px; margin: 0 0 0 -8px; border-radius: 50%; display: grid; place-items: center; background: radial-gradient(circle at 60% 40%, #4ab4fb, #1a64d8); border: 1px solid #7cc4fb; flex: none; }
    .time { flex: 1; text-align: center; white-space: nowrap; }
    b { color: #ffd9a0; }
  `];
  render() {
    const quick = ["eye", "toros", "redx", "calc", "camera", "disc", "pages", "eclipse", "atom", "hammer", "folder", "panels", "hex", "play", "clock"] as const;
    const tasks = [
      ["eclipse", "Java..."], ["fox", "Mozill..."], ["cmd", "Tomcat"], ["clock", "Cale..."],
      ["blank", "J..."], ["msn", "MSN"], ["brushes", "Sams..."],
    ] as const;
    return html`
      <button class="start">
        <svg width="18" height="18" viewBox="0 0 18 18"><path d="M3 3q3-2 6 0L8 9Q5 7 2 9z" fill="#ee5a28"/><path d="M10 3.500q3 2 6 0l-1 6q-3 2-6 0z" fill="#8cc83c"/><path d="M2 10q3-2 6 0l-1 6q-3-2-6 0z" fill="#4a90ee"/><path d="M9 10.500q3 2 6 0l-1 6q-3 2-6 0z" fill="#fccc34"/></svg>start
      </button>
      <span class="dots first"></span>
      <div class="quick">${quick.map((n) => pic(icons[n]))}</div>
      <span class="more"><svg width="9" height="6"><path d="m1 1 2 2-2 2M5 1l2 2-2 2" fill="none" stroke="#c4dcff" /></svg></span>
      <span class="dots"></span>
      <div class="tasks">
        ${tasks.map(([icon, name]) => html`
          <button class=${classMap({ task: true, down: icon === "blank", alert: icon === "msn" })}>
            ${pic(icons[icon])}<span>${icon === "blank" ? html`<b>2</b> ` : nothing}${name}</span>
            ${icon === "blank" ? html`<svg width="7" height="4"><path d="M0 0h6L3 3z" fill="#fff" /></svg>` : nothing}
          </button>`)}
      </div>
      <span class="dots"></span>
      <span class="lang">EN</span>
      <div class="tray">
        <button class="hide" aria-label="Hide icons">${chevron("left", "#fff")}</button>
        ${(["clock", "phone", "plug", "server", "speaker"] as const).map((n) => pic(icons[n]))}
        <span class="time">3:57 PM</span>
      </div>`;
  }
}

@customElement("app-root")
class AppRoot extends LitElement {
  static styles = css`
    :host { display: grid; grid-template-rows: minmax(0, 1fr) auto; height: 100vh; overflow: hidden; }
    .desk { position: relative; overflow: hidden; }
    .eclipse { position: absolute; inset: 0; }
    .outlook { position: absolute; inset: 0 0 95px 395px; }
    .scheduler { position: absolute; inset: 20px auto 10px 26px; width: 668px; box-sizing: border-box; }
  `;
  render() {
    return html`
      <div class="desk">
        <eclipse-window class="eclipse"></eclipse-window>
        <outlook-window class="outlook"></outlook-window>
        <scheduler-window class="scheduler"></scheduler-window>
      </div>
      <task-bar></task-bar>`;
  }
}
